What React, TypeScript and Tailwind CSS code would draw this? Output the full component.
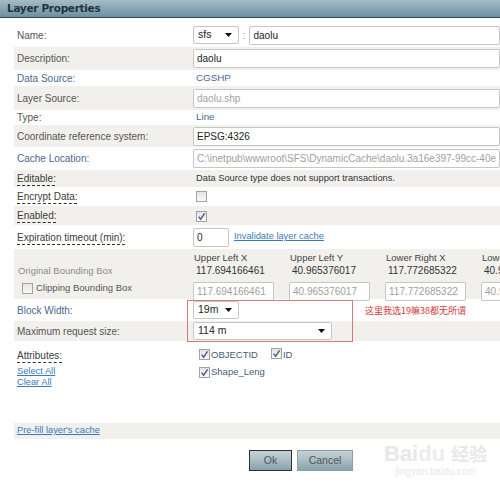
import React from 'react';

const rowGrey = 'bg-[#f1f0ec]';

function Check({ checked = false }: { checked?: boolean }) {
  return (
    <span className="inline-flex h-[11px] w-[11px] shrink-0 items-center justify-center border border-[#a2a2a2] bg-gradient-to-b from-[#e4e4e4] to-[#fafafa]">
      {checked && (
        <svg viewBox="0 0 9 9" className="h-[9px] w-[9px]">
          <path d="M1.6 4.6 L3.6 7.2 L7.6 1.4" fill="none" stroke="#4c5c7c" strokeWidth="1.4" />
        </svg>
      )}
    </span>
  );
}

function Select({ value, width }: { value: string; width: string }) {
  return (
    <div className={`flex h-[18px] items-center justify-between rounded-[2px] border border-[#c6c6c6] bg-white pl-[4px] pr-[6px] text-[10.5px] text-[#222] ${width}`}>
      <span>{value}</span>
      <svg viewBox="0 0 7 4" className="h-[4px] w-[7px]">
        <path d="M0 0 L7 0 L3.5 4 Z" fill="#111" />
      </svg>
    </div>
  );
}

function Field({ value, muted = false, width = 'w-[320px]' }: { value: string; muted?: boolean; width?: string }) {
  return (
    <input
      readOnly
      value={value}
      className={`h-[19px] rounded-[2px] border border-[#c6c6c6] bg-white px-[3px] text-[10px] outline-none ${muted ? 'text-[#a0a0a0]' : 'text-[#222]'} ${width}`}
    />
  );
}

function Row({ label, h, grey = false, tone = 'text-[#555]', dotted = false, children }: {
  label: string;
  h: string;
  grey?: boolean;
  tone?: string;
  dotted?: boolean;
  children?: React.ReactNode;
}) {
  return (
    <div className={`flex items-center pl-[3px] ${h} ${grey ? rowGrey : 'bg-white'}`}>
      <div className={`w-[176px] shrink-0 text-[10px] ${dotted ? 'text-[#3c3c3c]' : tone}`}>
        <span className={dotted ? 'underline decoration-[#333] decoration-dashed underline-offset-[3px]' : ''}>{label}</span>
      </div>
      <div className="flex min-w-0 items-center">{children}</div>
    </div>
  );
}

const link = 'text-[9.3px] text-[#3a79bb] underline';

export default function App() {
  const bbox = [
    ['Upper Left X', '117.694166461'],
    ['Upper Left Y', '40.965376017'],
    ['Lower Right X', '117.772685322'],
    ['Lower Right Y', '40.923416170'],
  ];

  return (
    <div className="relative h-[488px] w-[500px] overflow-hidden bg-white font-['Liberation_Sans',Arial,sans-serif]">
      <div className="flex h-[18px] items-center border-b border-[#2e4854] bg-gradient-to-b from-[#a6bcc7] to-[#6c90a1] pl-[7px]">
        <span className="font-['DejaVu_Sans',Verdana,sans-serif] text-[10.5px] font-bold tracking-[-0.3px] text-[#22343e]">Layer Properties</span>
      </div>

      <div className="ml-[14px] mt-[5px]">
        <Row label="Name:" h="h-[24px]">
          <Select value="sfs" width="w-[47px]" />
          <span className="mx-[4px] text-[10px] text-[#999]">:</span>
          <Field value="daolu" width="w-[260px]" />
        </Row>
        <Row label="Description:" h="h-[23px]" grey>
          <Field value="daolu" />
        </Row>
        <Row label="Data Source:" h="h-[16px]" tone="text-[#4a6890]">
          <span className="pl-[3px] text-[9.8px] text-[#4a6890]">CGSHP</span>
        </Row>
        <Row label="Layer Source:" h="h-[24px]" grey>
          <Field value="daolu.shp" muted />
        </Row>
        <Row label="Type:" h="h-[15px]">
          <span className="pl-[3px] text-[9.8px] text-[#4a6890]">Line</span>
        </Row>
        <Row label="Coordinate reference system:" h="h-[22px]" grey>
          <Field value="EPSG:4326" />
        </Row>
        <Row label="Cache Location:" h="h-[23px]" tone="text-[#4a6890]">
          <Field value="C:\inetpub\wwwroot\SFS\DynamicCache\daolu.3a16e397-99cc-40e0-a8b1" muted />
        </Row>
        <Row label="Editable:" h="h-[17px]" grey dotted>
          <span className="pl-[3px] text-[9.3px] text-[#333]">Data Source type does not support transactions.</span>
        </Row>
        <Row label="Encrypt Data:" h="h-[19px]" dotted>
          <span className="pl-[3px]"><Check /></span>
        </Row>
        <Row label="Enabled:" h="h-[19px]" grey dotted>
          <span className="pl-[3px]"><Check checked /></span>
        </Row>
        <Row label="Expiration timeout (min):" h="h-[24px]" dotted>
          <Field value="0" width="w-[36px]" />
          <span className={`ml-[5px] ${link}`}>Invalidate layer cache</span>
        </Row>

        <div className={`flex h-[50px] pl-[3px] ${rowGrey}`}>
          <div className="flex w-[176px] shrink-0 flex-col pt-[16px] text-[9.5px] leading-[12px]">
            <span className="pl-[1px] text-[#8c8c8c]">Original Bounding Box</span>
            <span className="mt-[5px] flex items-center gap-[3px] pl-[5px] text-[#555]">
              <Check />
              Clipping Bounding Box
            </span>
          </div>
          <div className="flex gap-[15px] pt-[2px]">
            {bbox.map(([head, val]) => (
              <div key={head} className="flex w-[81px] shrink-0 flex-col">
                <span className="pl-[1px] text-[9.5px] leading-[13px] text-[#444]">{head}</span>
                <span className="pl-[3px] text-[10px] leading-[13px] text-[#333]">{val}</span>
                <div className="mt-[1px]">
                  <Field value={val} muted width="w-[81px]" />
                </div>
              </div>
            ))}
          </div>
        </div>

        <Row label="Block Width:" h="h-[22px]" tone="text-[#4a6890]">
          <Select value="19m" width="w-[60px]" />
          <span className="ml-[126px] inline-block origin-left scale-[0.75] whitespace-nowrap font-['Noto_Sans_CJK_SC',sans-serif] text-[12px] text-[#d03a3a]">这里我选19嘛38都无所谓</span>
        </Row>
        <Row label="Maximum request size:" h="h-[20px]" grey>
          <Select value="114 m" width="w-[139px]" />
        </Row>

        <div className="flex h-[82px] bg-white pl-[3px]">
          <div className="flex w-[176px] shrink-0 flex-col pt-[7px] text-[10px]">
            <span className="text-[#3c3c3c] underline decoration-[#333] decoration-dashed underline-offset-[3px]">Attributes:</span>
            <span className={`mt-[3px] leading-[11px] ${link}`}>Select All</span>
            <span className={`leading-[11px] ${link}`}>Clear All</span>
          </div>
          <div className="flex flex-col gap-[5px] pl-[6px] pt-[7px] text-[9.5px] leading-[12px] text-[#4a5a7a]">
            <div className="flex items-center">
              <Check checked />
              <span className="ml-[1px]">OBJECTID</span>
              <span className="ml-[13px]"><Check checked /></span>
              <span className="ml-[1px]">ID</span>
            </div>
            <div className="flex items-center">
              <Check checked />
              <span className="ml-[1px]">Shape_Leng</span>
            </div>
          </div>
        </div>

        <div className={`flex h-[16px] items-center pl-[3px] ${rowGrey}`}>
          <span className={link}>Pre-fill layer's cache</span>
        </div>

        <div className="flex gap-[5px] pl-[235px] pt-[11px]">
          <button className="h-[21px] w-[43px] border border-[#303030] bg-gradient-to-b from-[#c5d2d8] via-[#a9bcc4] to-[#8aa2ac] text-[10.5px] text-[#555]">Ok</button>
          <button className="h-[21px] w-[56px] border border-[#8c9ea6] bg-gradient-to-b from-[#c5d2d8] via-[#a9bcc4] to-[#8aa2ac] text-[10.5px] text-[#555]">Cancel</button>
        </div>
      </div>

      <div className="pointer-events-none absolute left-[187px] top-[300px] h-[42px] w-[166px] border border-[#d27a7a]" />

      <div className="pointer-events-none absolute left-[384px] top-[441px] flex flex-col items-center text-[#e8e8e8]">
        <span className="font-['Liberation_Sans',sans-serif] text-[22px] font-bold leading-[24px]">Bai<span className="text-[#ececec]">du</span> <span className="font-['Noto_Sans_CJK_SC',sans-serif] text-[18px]">经验</span></span>
        <span className="text-[10px] leading-[12px]">jingyan.baidu.com</span>
      </div>
    </div>
  );
}
